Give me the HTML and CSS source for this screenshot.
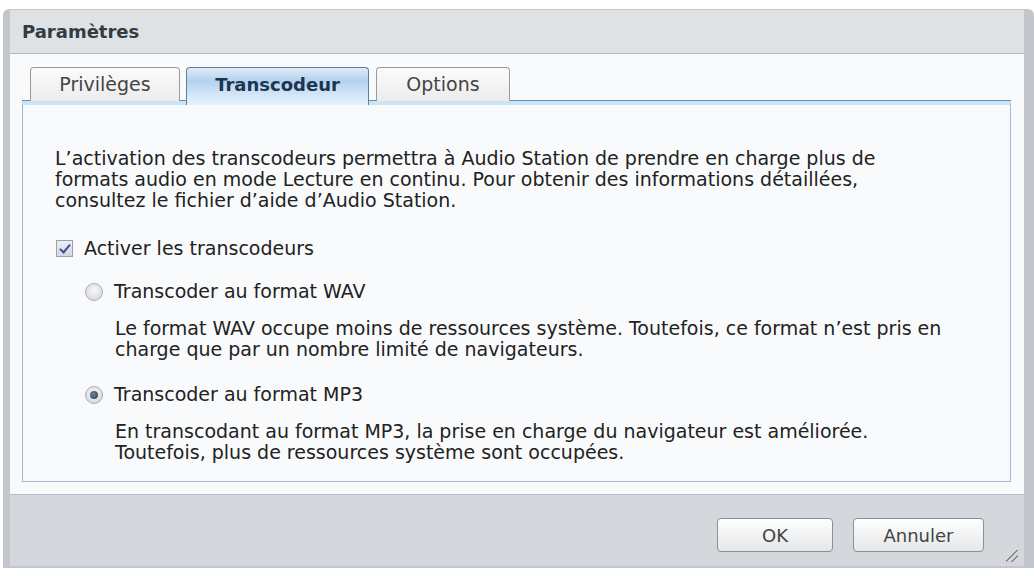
FILE: index.html
```html
<!DOCTYPE html>
<html lang="fr">
<head>
    <meta charset="UTF-8">
    <title>Paramètres</title>
    <link rel="stylesheet" href="styles.css">
</head>
<body>
    <div class="window">
        <div class="title-bar">Paramètres</div>

        <div class="body">
            <div class="tabs">
                <div class="tab tab-privileges">Privilèges</div>
                <div class="tab tab-transcoder active">Transcodeur</div>
                <div class="tab tab-options">Options</div>
            </div>

            <div class="panel">
                <p class="intro">L’activation des transcodeurs permettra à Audio Station de prendre en charge plus de<br>formats audio en mode Lecture en continu. Pour obtenir des informations détaillées,<br>consultez le fichier d’aide d’Audio Station.</p>

                <div class="option check-row">
                    <span class="checkbox checked"></span>
                    <span>Activer les transcodeurs</span>
                </div>

                <div class="option radio-row">
                    <span class="radio"></span>
                    <span>Transcoder au format WAV</span>
                </div>
                <p class="desc">Le format WAV occupe moins de ressources système. Toutefois, ce format n’est pris en<br>charge que par un nombre limité de navigateurs.</p>

                <div class="option radio-row">
                    <span class="radio selected"></span>
                    <span>Transcoder au format MP3</span>
                </div>
                <p class="desc">En transcodant au format MP3, la prise en charge du navigateur est améliorée.<br>Toutefois, plus de ressources système sont occupées.</p>
            </div>
        </div>

        <div class="footer">
            <button class="btn btn-ok">OK</button>
            <button class="btn">Annuler</button>
            <span class="grip"></span>
        </div>
    </div>
</body>
</html>
```

FILE: styles.css
```css
* {
    margin: 0;
    padding: 0;
    box-sizing: border-box;
}

body {
    font-family: 'DejaVu Sans', Verdana, sans-serif;
    font-size: 19px;
    color: #222;
    background: #ffffff;
    height: 576px;
    overflow: hidden;
}

.window {
    margin: 9px 0 0 3px;
    height: 559px;
    border: 7px solid #c3c7cb;
    border-top-width: 1px;
    border-right-width: 10px;
    border-bottom-width: 2px;
    border-radius: 6px 6px 0 0;
    display: flex;
    flex-direction: column;
    background: #f9fafb;
}

.title-bar {
    height: 44px;
    background: #dfe2e5;
    border-bottom: 1px solid #b5b9bd;
    padding: 11px 0 0 12px;
    font-weight: bold;
    font-size: 18px;
    color: #333a42;
}

.body {
    flex: 1;
    padding: 13px 13px 12px 12px;
    display: flex;
    flex-direction: column;
}

.tabs {
    display: flex;
    gap: 6px;
    padding-left: 8px;
    height: 34px;
    position: relative;
    z-index: 1;
}

.tab {
    width: 150px;
    text-align: center;
    padding-top: 5px;
    color: #444;
    border: 1px solid #9a9a9a;
    border-bottom: none;
    border-radius: 4px 4px 0 0;
    background: linear-gradient(#fbfbfb, #ececec);
}

.tab-transcoder {
    width: 183px;
}

.tab-options {
    width: 134px;
    margin-left: 1px;
}

.tab.active {
    font-weight: bold;
    font-size: 18px;
    padding-top: 6px;
    color: #1d3550;
    border-color: #5f7f9b;
    background: linear-gradient(#dfebf6, #b3d2ee 35%, #d5e8f8 75%, #e6f2fc);
    height: 38px;
}

.panel {
    flex: 1;
    border: 1px solid #9fbad0;
    border-top: 4px solid #cbe5f8;
    box-shadow: 0 -1px 0 #6d8ca6;
    padding: 43px 10px 0 32px;
    line-height: 21px;
}

.intro {
    margin-bottom: 27px;
}

.option {
    display: flex;
    align-items: center;
    gap: 11px;
    height: 21px;
}

.radio-row {
    margin: 22px 0 16px 30px;
}

.radio-row + .desc + .radio-row {
    margin-top: 24px;
}

.desc {
    margin-left: 60px;
}

.checkbox {
    width: 17px;
    height: 17px;
    margin-left: 1px;
    border: 1px solid #9aa0a6;
    background: linear-gradient(#eceef2, #d3d8e0);
    position: relative;
}

.checkbox.checked::after {
    content: "";
    position: absolute;
    left: 5px;
    top: 1px;
    width: 4px;
    height: 9px;
    border: solid #3b4fa0;
    border-width: 0 2px 2px 0;
    transform: rotate(40deg);
}

.radio {
    width: 18px;
    height: 18px;
    border-radius: 50%;
    border: 1px solid #a9adb2;
    background: radial-gradient(circle at 50% 40%, #f7f7f7, #d0d2d5);
    position: relative;
}

.radio.selected::after {
    content: "";
    position: absolute;
    left: 4px;
    top: 4px;
    width: 8px;
    height: 8px;
    border-radius: 50%;
    background: radial-gradient(circle at 40% 40%, #6d7f96, #2f3f55);
}

.footer {
    height: 72px;
    background: #d4d8dc;
    border-top: 1px solid #b8bcc0;
    display: flex;
    justify-content: flex-end;
    align-items: flex-start;
    padding: 23px 40px 0 0;
    gap: 20px;
    position: relative;
}

.btn {
    font-family: 'DejaVu Sans', Verdana, sans-serif;
    font-size: 18px;
    color: #444;
    height: 34px;
    width: 131px;
    border: 1px solid #8c9095;
    border-radius: 4px;
    background: linear-gradient(#ffffff, #e4e6e8);
}

.btn-ok {
    width: 116px;
}

.grip {
    position: absolute;
    right: 6px;
    bottom: 4px;
    width: 12px;
    height: 12px;
    background: linear-gradient(135deg, transparent 45%, #888 45%, #888 52%, transparent 52%, transparent 70%, #888 70%, #888 77%, transparent 77%);
}
```
